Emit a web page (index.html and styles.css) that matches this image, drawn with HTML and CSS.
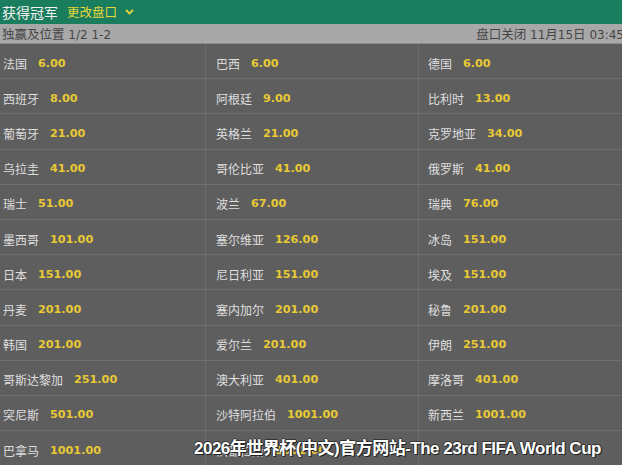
FILE: index.html
```html
<!DOCTYPE html>
<html lang="zh-CN">
<head>
<meta charset="utf-8">
<title>获得冠军</title>
<link rel="stylesheet" href="styles.css">
</head>
<body>
<div class="page">
  <header class="topbar">
    <span class="title">获得冠军</span>
    <span class="change">更改盘口</span>
    <svg class="chev" width="9" height="6" viewBox="0 0 9 6"><path d="M1 1 L4.5 4.5 L8 1" fill="none" stroke="#e6d23c" stroke-width="1.8"/></svg>
  </header>
  <div class="subbar">
    <span class="sub-left"><span class="cjk">独赢及位置</span> 1/2 1-2</span>
    <span class="sub-right"><span class="cjk">盘口关闭</span> 11<span class="cjk">月</span>15<span class="cjk">日</span> 03:45</span>
  </div>
  <div class="grid">
    <div class="cell c1"><span class="nm">法国</span><span class="od">6.00</span></div>
    <div class="cell c2"><span class="nm">巴西</span><span class="od">6.00</span></div>
    <div class="cell c3"><span class="nm">德国</span><span class="od">6.00</span></div>

    <div class="cell c1"><span class="nm">西班牙</span><span class="od">8.00</span></div>
    <div class="cell c2"><span class="nm">阿根廷</span><span class="od">9.00</span></div>
    <div class="cell c3"><span class="nm">比利时</span><span class="od">13.00</span></div>

    <div class="cell c1"><span class="nm">葡萄牙</span><span class="od">21.00</span></div>
    <div class="cell c2"><span class="nm">英格兰</span><span class="od">21.00</span></div>
    <div class="cell c3"><span class="nm">克罗地亚</span><span class="od">34.00</span></div>

    <div class="cell c1"><span class="nm">乌拉圭</span><span class="od">41.00</span></div>
    <div class="cell c2"><span class="nm">哥伦比亚</span><span class="od">41.00</span></div>
    <div class="cell c3"><span class="nm">俄罗斯</span><span class="od">41.00</span></div>

    <div class="cell c1"><span class="nm">瑞士</span><span class="od">51.00</span></div>
    <div class="cell c2"><span class="nm">波兰</span><span class="od">67.00</span></div>
    <div class="cell c3"><span class="nm">瑞典</span><span class="od">76.00</span></div>

    <div class="cell c1"><span class="nm">墨西哥</span><span class="od">101.00</span></div>
    <div class="cell c2"><span class="nm">塞尔维亚</span><span class="od">126.00</span></div>
    <div class="cell c3"><span class="nm">冰岛</span><span class="od">151.00</span></div>

    <div class="cell c1"><span class="nm">日本</span><span class="od">151.00</span></div>
    <div class="cell c2"><span class="nm">尼日利亚</span><span class="od">151.00</span></div>
    <div class="cell c3"><span class="nm">埃及</span><span class="od">151.00</span></div>

    <div class="cell c1"><span class="nm">丹麦</span><span class="od">201.00</span></div>
    <div class="cell c2"><span class="nm">塞内加尔</span><span class="od">201.00</span></div>
    <div class="cell c3"><span class="nm">秘鲁</span><span class="od">201.00</span></div>

    <div class="cell c1"><span class="nm">韩国</span><span class="od">201.00</span></div>
    <div class="cell c2"><span class="nm">爱尔兰</span><span class="od">201.00</span></div>
    <div class="cell c3"><span class="nm">伊朗</span><span class="od">251.00</span></div>

    <div class="cell c1"><span class="nm">哥斯达黎加</span><span class="od">251.00</span></div>
    <div class="cell c2"><span class="nm">澳大利亚</span><span class="od">401.00</span></div>
    <div class="cell c3"><span class="nm">摩洛哥</span><span class="od">401.00</span></div>

    <div class="cell c1"><span class="nm">突尼斯</span><span class="od">501.00</span></div>
    <div class="cell c2"><span class="nm">沙特阿拉伯</span><span class="od">1001.00</span></div>
    <div class="cell c3"><span class="nm">新西兰</span><span class="od">1001.00</span></div>

    <div class="cell c1"><span class="nm">巴拿马</span><span class="od">1001.00</span></div>
    <div class="cell c2"><span class="nm">洪都拉斯</span><span class="od">1001.00</span></div>
    <div class="cell c3"></div>
  </div>
  <div class="watermark">2026年世界杯(中文)官方网站-The 23rd FIFA World Cup</div>
</div>
</body>
</html>
```

FILE: styles.css
```css
html, body {
  margin: 0;
  padding: 0;
  background: #5f5e5e;
}
body {
  width: 622px;
  height: 465px;
  overflow: hidden;
  font-family: "Noto Sans CJK SC", "DejaVu Sans", sans-serif;
}
.page {
  position: relative;
  width: 622px;
  height: 465px;
  overflow: hidden;
}
.topbar {
  height: 24px;
  background: #1a7d5d;
  display: flex;
  align-items: center;
  padding-left: 2px;
  box-sizing: border-box;
}
.title {
  color: #f2f2f2;
  font-size: 14px;
  line-height: 24px;
}
.change {
  color: #e4d83a;
  font-size: 12.5px;
  line-height: 24px;
  margin-left: 9px;
}
.chev {
  margin-left: 8px;
  margin-top: -1px;
}
.subbar {
  height: 20px;
  background: #a9a8a8;
  display: flex;
  justify-content: space-between;
  align-items: center;
  padding-left: 2px;
  box-sizing: border-box;
  color: #454545;
  font-family: "DejaVu Sans", sans-serif;
  font-size: 12px;
  white-space: nowrap;
  overflow: hidden;
  border-bottom: 1px solid #8f8e8e;
}
.cjk {
  font-family: "Noto Sans CJK SC", sans-serif;
  font-size: 12.5px;
}
.sub-right {
  margin-right: -2px;
}
.grid {
  display: grid;
  grid-template-columns: 206px 213px 1fr;
  grid-auto-rows: 35.2px;
}
.cell {
  display: flex;
  align-items: center;
  padding-top: 4px;
  border-bottom: 1px solid #706f6f;
  box-sizing: border-box;
  white-space: nowrap;
}
.c1 {
  padding-left: 3px;
  border-right: 1px solid #6d6c6c;
}
.c2 {
  padding-left: 10px;
  border-right: 1px solid #6d6c6c;
}
.c3 {
  padding-left: 9px;
}
.nm {
  color: #dedede;
  font-size: 12px;
  margin-right: 11px;
}
.od {
  color: #e8c935;
  font-family: "DejaVu Sans", sans-serif;
  font-weight: bold;
  font-size: 11.2px;
}
.watermark {
  position: absolute;
  left: 194px;
  top: 434px;
  color: #ffffff;
  font-family: "Liberation Sans", "Noto Sans CJK SC", sans-serif;
  font-weight: bold;
  font-size: 17px;
  letter-spacing: -0.5px;
  white-space: nowrap;
  text-shadow: 1px 1px 0 #222, -1px 0 0 #333, 0 -1px 0 #333, 1px 0 0 #333;
}
```
